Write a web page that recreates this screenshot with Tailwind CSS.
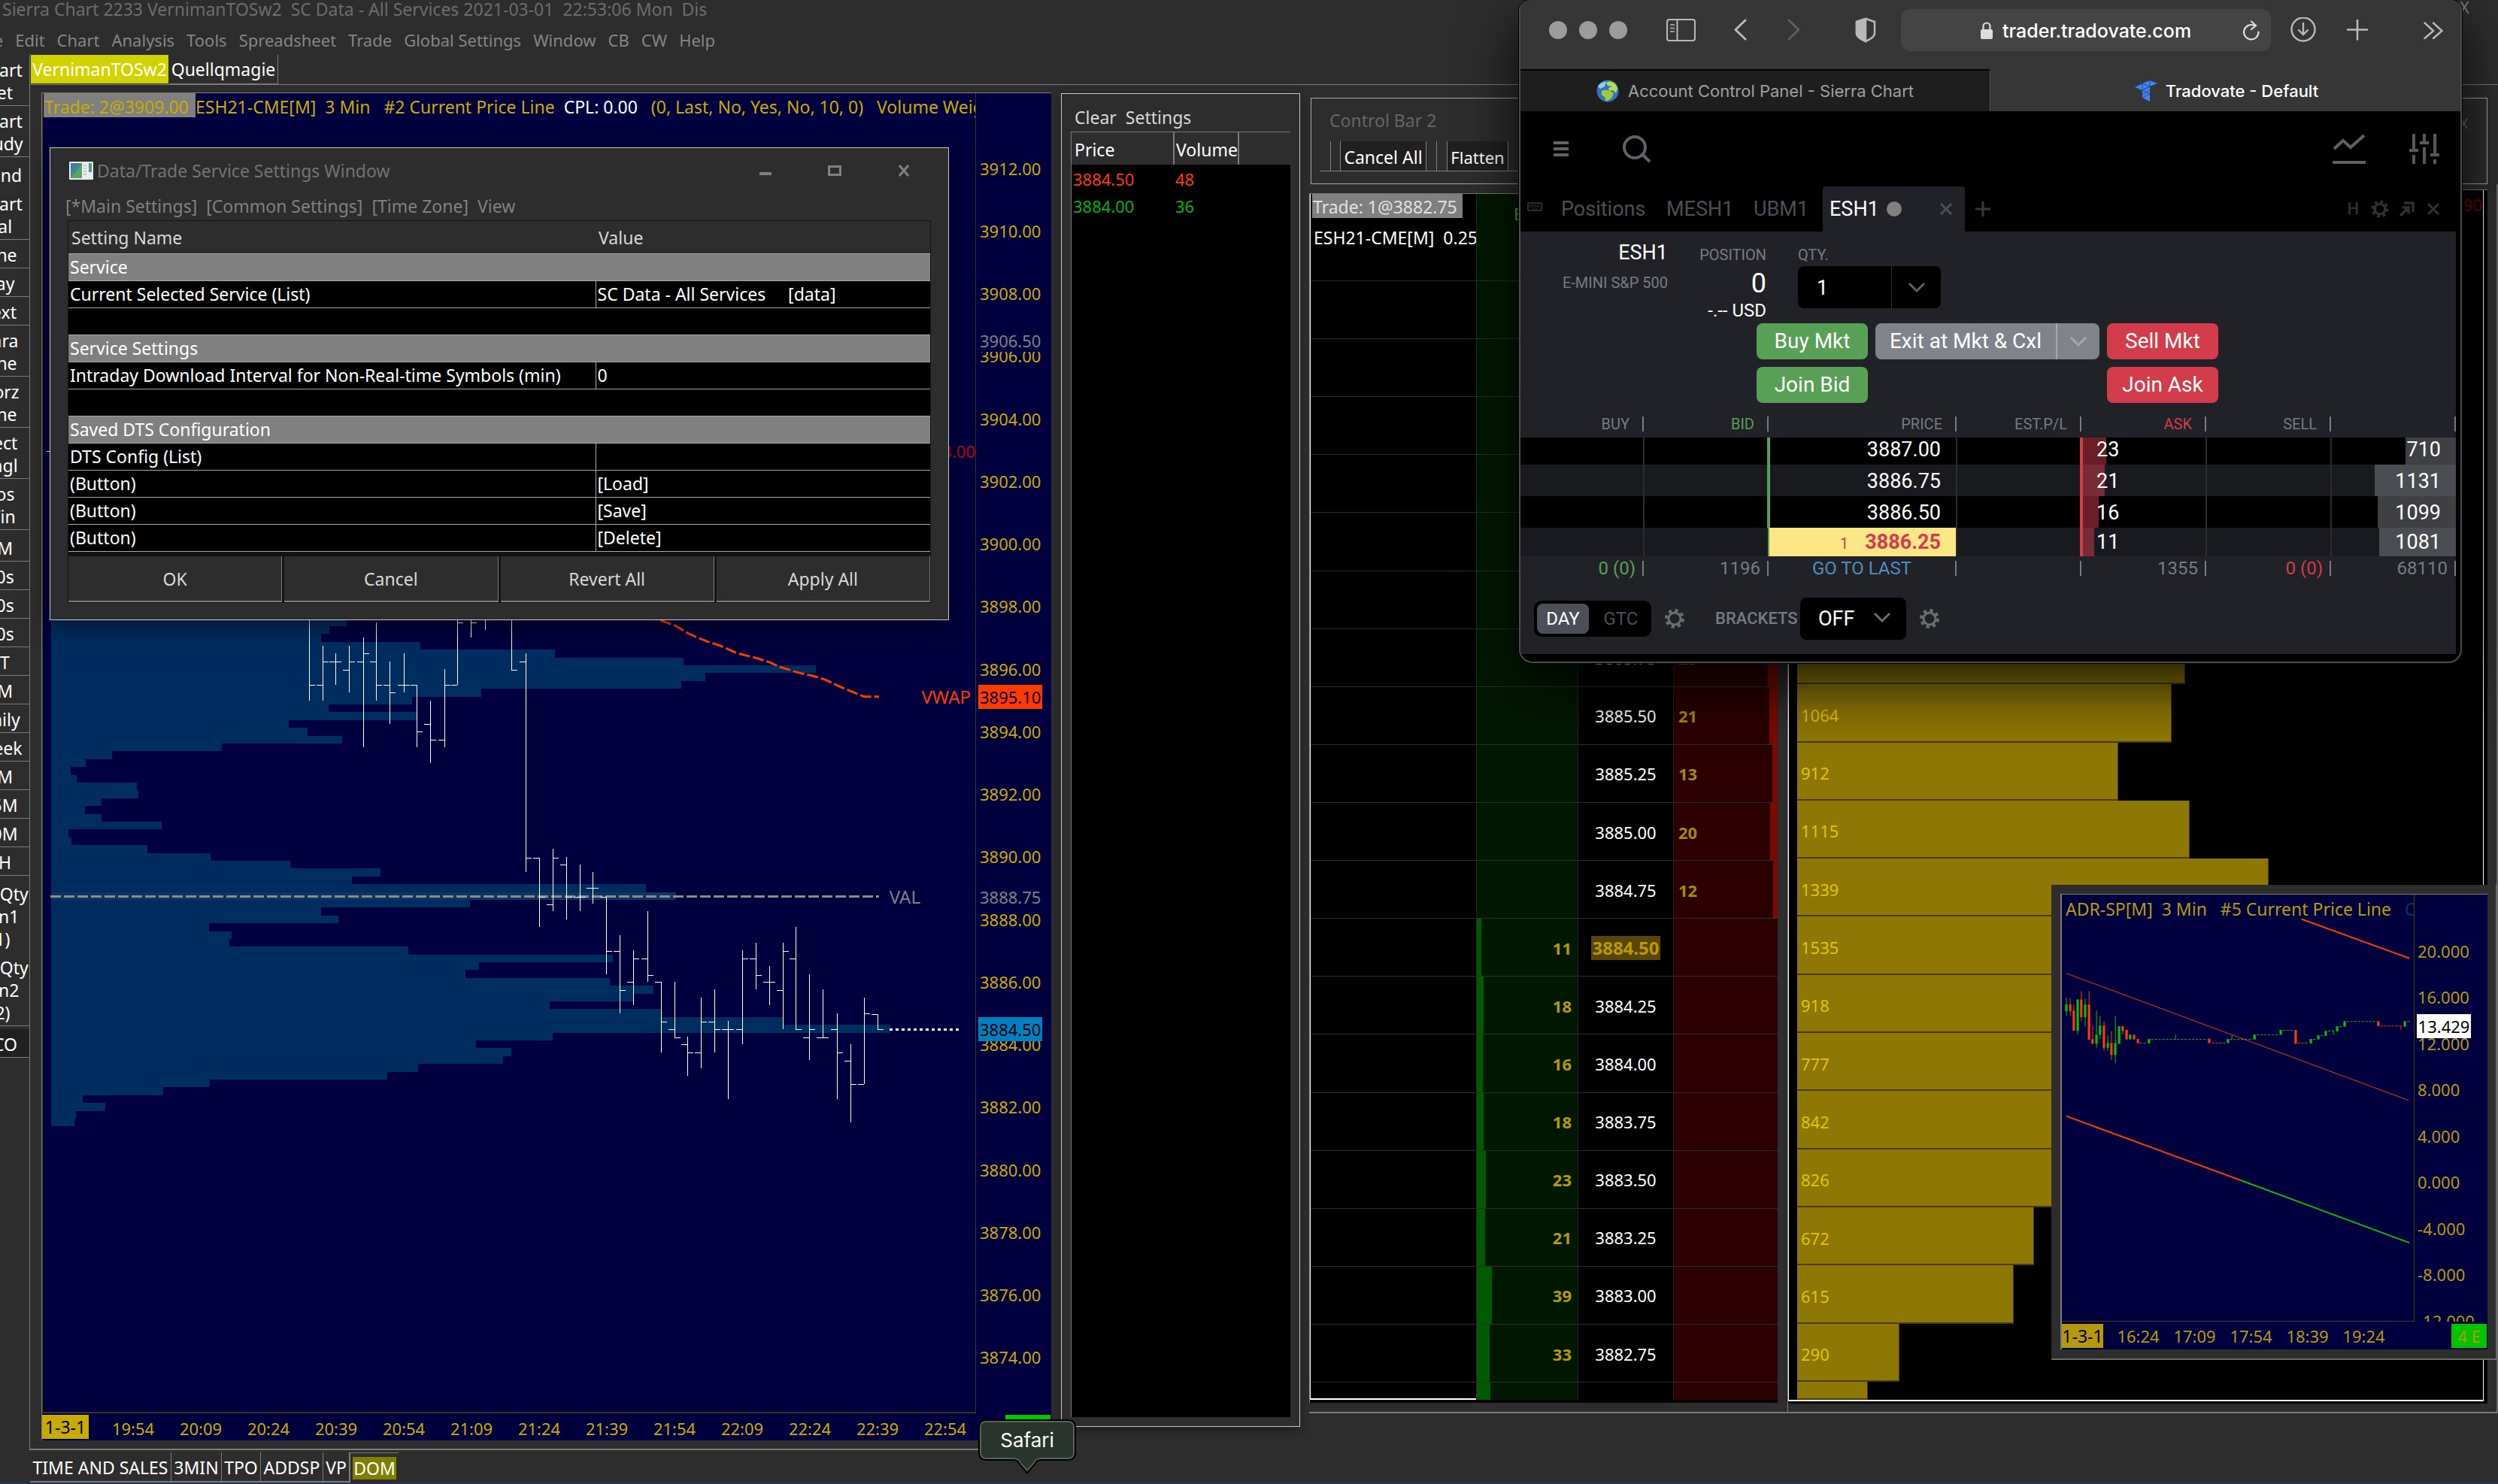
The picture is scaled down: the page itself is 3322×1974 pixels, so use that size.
<!DOCTYPE html>
<html lang="en">
<head>
<meta charset="utf-8">
<title>Sierra Chart</title>
<script src="https://cdn.jsdelivr.net/npm/@tailwindcss/browser@4"></script>
</head>
<body class="bg-[#2d2d2d]">
<div class="relative flex h-screen w-full flex-col overflow-hidden bg-[#2d2d2d] font-['Noto_Sans','Open_Sans',sans-serif] text-[23px] leading-[30px] whitespace-nowrap text-white">

  <!-- Title and menu bar -->
  <header class="h-[72px] shrink-0">
    <h1 class="h-[38px] pl-[3px] leading-[24px] whitespace-pre text-[#6c6c6c]">Sierra Chart 2233 VernimanTOSw2  SC Data - All Services 2021-03-01  22:53:06 Mon  Dis</h1>
    <nav class="-ml-[31px] flex gap-4 text-[22px] text-[#858585]">
      <a href="#">File</a><a href="#">Edit</a><a href="#">Chart</a><a href="#">Analysis</a><a href="#">Tools</a><a href="#">Spreadsheet</a><a href="#">Trade</a><a href="#">Global Settings</a><a href="#">Window</a><a href="#">CB</a><a href="#">CW</a><a href="#">Help</a>
    </nav>
  </header>

  <div class="flex min-h-0 flex-1">
    <!-- Tool strip -->
    <aside class="w-10 shrink-0 overflow-hidden border-r border-[#7b7b7b]">
      <div id="tools" class="-ml-10 flex w-20 flex-col pt-px text-center"></div>
    </aside>

    <div class="flex min-w-0 flex-1 flex-col">
      <!-- Chartbook tabs -->
      <div class="flex h-[41px] shrink-0 items-start border-b border-[#7b7b7b] pt-px pl-px">
        <button class="h-[38px] w-[183px] bg-[#d2d200]">VernimanTOSw2</button>
        <button class="ml-px h-[39px] w-[145px] border-r border-b border-[#7b7b7b]">Quellqmagie</button>
      </div>

      <div class="grid min-h-0 flex-1 grid-cols-[1371fr_318fr_1593fr]">
        <!-- Main price chart -->
        <section class="flex min-w-0 flex-col border-b-2 border-[#7b7b7b] pt-[10px] pr-[13px] pb-[11px] pl-[15px]">
          <div class="flex min-h-0 flex-1 flex-col border-t border-l border-[#7b7b7b]">
            <div class="flex min-h-0 flex-1 border-l border-[#4d4108] bg-[#00003f]">
              <div class="relative min-w-0 flex-1 overflow-hidden border-r border-b-2 border-[#3c3420]">
                <svg id="plot" class="absolute inset-0 h-full w-full" viewBox="57 124 1240 1754" preserveAspectRatio="none" shape-rendering="crispEdges"></svg>
                <div class="relative flex pl-px text-[#c8ab00]">
                  <span class="h-8 w-[202px] shrink-0 bg-[#808080] pt-[3px] pl-px">Trade: 2@3909.00</span>
                  <span class="shrink-0 pt-[3px] whitespace-pre">ESH21-CME[M]  3 Min   #2 Current Price Line  <b class="font-normal text-white">CPL: 0.00</b>   (0, Last, No, Yes, No, 10, 0)   Volume Weighted</span>
                </div>
                <span class="absolute top-[461px] right-0 text-[22px] text-[#c00010]">3903.00</span>
                <span class="absolute top-[788px] right-[6px] text-[24px] text-[#ff3a08]">VWAP</span>
                <span class="absolute top-[1054px] right-[73px] text-[24px] text-[#808080]">VAL</span>
              </div>
              <div class="relative flex w-[100px] shrink-0 flex-col pt-[58px] pb-[33px] text-[22px] text-[#c8ab00]">
                <div id="prices" class="flex flex-1 flex-col"></div>
                <span class="absolute top-[314px] left-[3px] bg-[#00003f] px-[2px] text-[#808080]">3906.50</span>
                <span class="absolute top-[787px] left-[3px] h-8 bg-[#ff3a00] px-[2px] pt-px text-[#00003f]">3895.10</span>
                <span class="absolute top-[1054px] left-[3px] px-[2px] text-[#808080]">3888.75</span>
                <span class="absolute top-[1229px] left-[3px] h-8 bg-[#0080c0] px-[2px] pt-px text-black">3884.50</span>
              </div>
            </div>
            <div class="flex h-9 shrink-0 items-center bg-[#00003f] text-[22px] text-[#c8ab00]">
              <span class="mr-[14px] h-8 w-[62px] bg-[#c8ab00] pt-px text-center text-[23px] text-[#00003f]">1-3-1</span>
              <div id="times" class="flex flex-1 pt-[3px] text-center"></div>
              <div class="flex w-[96px] justify-end pr-px"><i class="h-8 w-[60px] bg-[#00c400]"></i></div>
            </div>
          </div>
        </section>

        <!-- Time and sales -->
        <section class="mt-[11px] mb-[31px] flex flex-col border border-[#c8c8c8] px-[12px] pt-[16px] pb-[12px] shadow-[0_6px_14px_rgba(0,0,0,0.3)]">
          <div class="flex gap-[12px] pl-[5px] text-[#d8d8d8]"><button>Clear</button><button>Settings</button></div>
          <div class="mt-1 flex flex-1 flex-col border-t border-l border-[#7b7b7b]">
            <table class="w-full table-fixed bg-black text-left">
              <thead class="bg-[#2d2d2d]"><tr class="h-[43px]"><th class="w-[136px] border-r-2 border-[#7b7b7b] pt-[2px] pl-[4px] font-normal">Price</th><th class="w-[86px] border-r-2 border-[#7b7b7b] pt-[2px] pl-[2px] font-normal">Volume</th><th></th></tr></thead>
              <tbody class="text-[22px]">
                <tr class="h-9 text-[#ff3a08]"><td class="pt-[2px] pl-[2px]">3884.50</td><td class="pt-[2px] pl-[2px]">48</td><td></td></tr>
                <tr class="h-9 text-[#00b400]"><td class="pt-[2px] pl-[2px]">3884.00</td><td class="pt-[2px] pl-[2px]">36</td><td></td></tr>
              </tbody>
            </table>
            <div class="flex-1 bg-black"></div>
          </div>
        </section>

        <!-- Control bar and trading DOM -->
        <div class="flex min-h-0 min-w-0 flex-col pt-[17px] pb-[49px] pl-[12px]">
          <section class="mr-[14px] ml-[2px] h-[115px] shrink-0 border border-[#a8a8a8] pt-[14px] pl-[11px]">
            <h2 class="pl-[13px] text-[#666]">Control Bar 2</h2>
            <div class="mt-[13px] flex h-10 w-[300px] gap-[13px] border-b border-[#808080] pl-[14px]">
              <i class="-mr-px border-l border-[#808080]"></i>
              <button class="w-[115px] border-x border-[#808080] bg-[#202020] pt-[3px]">Cancel All</button>
              <i class="border-l border-[#808080]"></i>
              <button class="w-[82px] border-x border-[#808080] bg-[#202020] pt-[3px] text-[22px]">Flatten</button>
            </div>
          </section>
          <div class="grid min-h-0 flex-1 grid-cols-[637fr_944fr] border-b-2 border-[#7b7b7b]">
            <section class="flex flex-col border-r border-[#7b7b7b] pt-[12px] pr-[13px] pb-[12px]">
              <div class="flex min-h-0 flex-1 flex-col border-t border-l border-[#7b7b7b] bg-black pb-[4px]">
                <div id="dom" class="relative flex min-h-0 flex-1 flex-col border-l border-white text-[22px]">
                  <div class="grid h-[115px] shrink-0 grid-cols-[220fr_136fr_126fr_139fr]">
                    <div class="overflow-hidden pl-[2px] text-[23px]">
                      <span class="block h-8 w-[200px] bg-[#808080] pt-[2px] pl-px text-[#e0e0e0]">Trade: 1@3882.75</span>
                      <span class="mt-[11px] block pl-[2px] whitespace-pre">ESH21-CME[M]  0.25</span>
                    </div>
                    <div class="border-x border-[#262626] bg-[#001800] pt-[11px] pl-[49px] text-[#4fa04f]">Est</div><div></div><div class="bg-[#2a0000]"></div>
                  </div>
                </div>
              </div>
            </section>
            <section class="flex flex-col border-r-2 border-[#6b6b6b] pt-[7px] pr-[12px] pb-[11px]">
              <div class="flex min-h-0 flex-1 flex-col border-t border-[#7b7b7b] bg-black pr-[5px] pb-[3px]">
                <div id="hist" class="flex min-h-0 flex-1 flex-col border-x border-b-2 border-white pl-[11px] text-[22px]">
                  <div class="h-[116px] shrink-0 pt-[4px] pr-px text-right text-[#700000]">90</div>
                </div>
              </div>
            </section>
          </div>
        </div>
      </div>
    </div>
  </div>

  <!-- Chart tabs -->
  <footer class="flex h-[45px] shrink-0 flex-col border-b-2 border-[#26345c] pt-[3px] pl-10">
    <div class="flex h-10">
      <button class="w-[188px] border-r border-b-2 border-[#7b7b7b] pt-[2px]">TIME AND SALES</button>
      <button class="w-[67px] border-r border-b-2 border-[#7b7b7b] pt-[2px]">3MIN</button>
      <button class="w-[52px] border-r border-b-2 border-[#7b7b7b] pt-[2px]">TPO</button>
      <button class="w-[83px] border-r border-b-2 border-[#7b7b7b] pt-[2px]">ADDSP</button>
      <button class="w-[36px] border-r-2 border-b-2 border-[#7b7b7b] pt-[2px]">VP</button>
      <button class="w-[64px] border-t border-[#7b7b7b] px-[3px]"><span class="block bg-[#808000]">DOM</span></button>
    </div>
  </footer>

  <!-- Background window close marks -->
  <span class="absolute top-[-6px] right-[38px] text-[22px] text-[#808080]">X</span>
  <span class="absolute top-[149px] right-[40px] text-[18px] text-[#707070]">X</span>

  <!-- Data/Trade service settings -->
  <section class="absolute top-[196px] left-[66px] w-[1196px] border border-[#c8c8c8] bg-[#2d2d2d] shadow-[0_8px_30px_rgba(0,0,0,0.5)]">
    <div class="flex h-[60px] items-center pl-[25px] text-[#727272]">
      <svg class="h-6 w-8" viewBox="0 0 32 24"><rect width="32" height="24" rx="1" fill="#e8ecec"/><rect x="2" y="2" width="15" height="20" fill="#3f8f83"/><path d="M2 22L17 4v18z" fill="#5aa56b"/><path d="M2 2h12L2 14z" fill="#3e7fa0"/><path d="M19 5h4M19 9h4M19 13h4M19 17h4" stroke="#a7adb0"/><rect x="26" y="2" width="4" height="12" fill="#4c9d84"/></svg>
      <h2 class="flex-1 pl-[5px]">Data/Trade Service Settings Window</h2>
      <button aria-label="Minimize" class="mt-[8px] mr-[75px] h-[4px] w-4 bg-[#808080]"></button>
      <button aria-label="Maximize" class="mr-[75px] h-[14px] w-[18px] border-[3px] border-[#808080]"></button>
      <button aria-label="Close" class="mr-[51px]"><svg class="h-4 w-4" viewBox="0 0 16 16" stroke="#808080" stroke-width="3"><path d="M2 1l12 14M14 1L2 15"/></svg></button>
    </div>
    <nav class="flex gap-3 pt-[2px] pl-[20px] text-[#808080]"><a href="#">[*Main Settings]</a><a href="#">[Common Settings]</a><a href="#">[Time Zone]</a><a href="#">View</a></nav>
    <div class="mx-[23px] mt-[4px] mb-[22px] border border-[#141414] bg-[#141414]">
      <table class="w-full table-fixed border-collapse bg-black text-left">
        <colgroup><col class="w-[701px]"><col></colgroup>
        <thead class="bg-[#2d2d2d] text-[#d8d8d8]"><tr class="h-[43px]"><th class="pt-[2px] pl-[4px] font-normal">Setting Name</th><th class="pt-[2px] pl-[4px] font-normal">Value</th></tr></thead>
        <tbody id="settings"></tbody>
      </table>
      <div class="mt-[6px] grid grid-cols-4 gap-[3px] text-[#d8d8d8]">
        <button class="h-[61px] border-r border-b-2 border-[#7b7b7b] bg-[#2d2d2d] pt-[2px]">OK</button>
        <button class="h-[61px] border-r border-b-2 border-[#7b7b7b] bg-[#2d2d2d] pt-[2px]">Cancel</button>
        <button class="h-[61px] border-r border-b-2 border-[#7b7b7b] bg-[#2d2d2d] pt-[2px]">Revert All</button>
        <button class="h-[61px] border-r border-b-2 border-[#7b7b7b] bg-[#2d2d2d] pt-[2px]">Apply All</button>
      </div>
    </div>
  </section>

  <!-- ADR chart window -->
  <section class="absolute top-[1177px] right-px flex h-[632px] w-[593px] flex-col border-r-2 border-b-2 border-[#6b6b6b] bg-[#2d2d2d] pt-[12px] pr-[11px] pb-[12px] pl-[12px] text-[22px] text-[#b49a0a]">
    <div class="flex min-h-0 flex-1 flex-col border-t border-l-2 border-[#7b7b7b] bg-[#00003f]">
      <div class="flex min-h-0 flex-1">
        <div class="relative min-w-0 flex-1 overflow-hidden border-r border-b border-[#4d4108]">
          <svg id="adr" class="absolute inset-0 h-full w-full" viewBox="107 113 1180 1272" preserveAspectRatio="none"></svg>
          <div class="relative pt-[4px] pl-[5px] text-[23px] whitespace-pre">ADR-SP[M]  3 Min   #5 Current Price Line   <span class="text-[#003c50]">CPL</span></div>
        </div>
        <div class="relative w-[97px] shrink-0 overflow-hidden pt-[44px] pl-[4px]">
          <div id="adrPrices" class="flex h-[492px] flex-col"></div>
          <div class="pt-[16px]">-12.000</div>
          <span class="absolute top-[159px] left-[3px] h-8 w-[72px] bg-white pt-px text-center text-black">13.429</span>
        </div>
      </div>
      <div class="flex h-[37px] shrink-0 items-center">
        <span class="mr-[9px] h-8 w-[55px] bg-[#b49a0a] pt-px text-center text-[23px] text-[#00003f]">1-3-1</span>
        <span class="w-[75px] pt-px text-center">16:24</span><span class="w-[75px] pt-px text-center">17:09</span><span class="w-[75px] pt-px text-center">17:54</span><span class="w-[75px] pt-px text-center">18:39</span><span class="w-[75px] pt-px text-center">19:24</span>
        <span class="mr-px ml-auto h-8 w-[47px] bg-[#00c400] pt-px text-center">4 E</span>
      </div>
    </div>
  </section>

  <!-- Safari window -->
  <section class="absolute top-0 right-[48px] w-[1254px] overflow-hidden rounded-t-[14px] rounded-b-[18px] border-x-2 border-b-2 border-[#4c4c4c] bg-black font-['Roboto',sans-serif] shadow-[0_0_0_1px_#000,0_30px_80px_rgba(0,0,0,0.8)]">
    <div class="flex h-[92px] items-start bg-[#363636] pt-[12px] pl-[38px] font-['Inter',sans-serif]">
      <div class="flex h-14 flex-1 items-center">
        <i class="h-6 w-6 rounded-full bg-[#9c9c9c]"></i><i class="ml-4 h-6 w-6 rounded-full bg-[#9c9c9c]"></i><i class="ml-4 h-6 w-6 rounded-full bg-[#9c9c9c]"></i>
        <button aria-label="Sidebar" class="ml-[52px]"><svg class="h-[30px] w-[40px]" viewBox="0 0 40 30" fill="none" stroke="#b9b9b9" stroke-width="2"><rect x="1" y="1" width="37" height="28" rx="3"/><path d="M14.500 1v28"/><path d="M5 8h6M5 12.500h6M5 17h6" stroke-width="1.500"/></svg></button>
        <button aria-label="Back" class="ml-[48px]"><svg class="h-8 w-[20px]" viewBox="0 0 20 32" fill="none" stroke="#b9b9b9" stroke-width="3" stroke-linecap="round" stroke-linejoin="round"><path d="M17 3L4 15.500L17 28"/></svg></button>
        <button aria-label="Forward" class="ml-[52px]"><svg class="h-8 w-[20px]" viewBox="0 0 20 32" fill="none" stroke="#5f5f5f" stroke-width="3" stroke-linecap="round" stroke-linejoin="round"><path d="M3 3L16 15.500L3 28"/></svg></button>
        <button aria-label="Privacy report" class="ml-[71px]"><svg class="h-[34px] w-[28px]" viewBox="0 0 28 34" fill="none" stroke="#b9b9b9" stroke-width="2.500"><path d="M14 2L26 6v15c0 5-6 8-12 11C8 29 2 26 2 21V6z"/><path d="M14 2v30C8 29 2 26 2 21V6z" fill="#b9b9b9"/></svg></button>
      </div>
      <div class="ml-[31px] flex h-14 w-[492px] items-center rounded-[12px] bg-[#444] pt-[2px]">
        <svg class="ml-[106px] h-6 w-4" viewBox="0 0 16 24"><rect y="10" width="16" height="13" rx="2" fill="#dcdcdc"/><path d="M3.500 11V6a4.500 4.500 0 0 1 9 0v5" fill="none" stroke="#dcdcdc" stroke-width="2.200"/></svg>
        <label class="sr-only" for="url">Address</label>
        <input id="url" class="ml-[13px] w-[300px] bg-transparent text-[25px] font-medium text-white" value="trader.tradovate.com">
        <button aria-label="Reload" class="mr-[15px] ml-auto"><svg class="h-[28px] w-[22px]" viewBox="0 0 22 28" fill="none" stroke="#dcdcdc" stroke-width="2.200" stroke-linecap="round"><path d="M20.500 15.500A9.700 9.700 0 1 1 15 7H17"/><path d="M11 1.500L17 7L11 12"/></svg></button>
      </div>
      <div class="flex h-14 w-[252px] items-center pl-[26px]">
        <button aria-label="Downloads"><svg class="h-[34px] w-[34px]" viewBox="0 0 34 34" fill="none" stroke="#b9b9b9" stroke-width="2.400" stroke-linecap="round"><circle cx="17" cy="16" r="15.500"/><path d="M17 8v14M11 17l6 6l6-6"/></svg></button>
        <button aria-label="New tab" class="ml-[41px]"><svg class="h-[28px] w-[28px]" viewBox="0 0 28 28" stroke="#b9b9b9" stroke-width="2.600" stroke-linecap="round"><path d="M14 0.500v26M1 13.500h26"/></svg></button>
        <button aria-label="More" class="ml-[74px]"><svg class="h-6 w-[26px]" viewBox="0 0 26 24" fill="none" stroke="#b9b9b9" stroke-width="2.400" stroke-linecap="round"><path d="M1.500 2.500L13 13L1.500 23M13 2.500L24.500 13L13 23"/></svg></button>
      </div>
    </div>
    <div class="grid h-14 grid-cols-2 bg-[#363636] font-['Inter',sans-serif] text-[22px]">
      <a href="#" class="flex items-center justify-center border-t-2 border-r border-t-black border-r-[#555] bg-[#1e1e1e] text-[#a0a0a0]">
        <svg class="mr-[12px] h-[30px] w-[30px]" viewBox="0 0 30 30"><circle cx="15" cy="15" r="14.500" fill="#2f74c4"/><path d="M2 9C5 4 9 3 13 3l-2 6l-6 3z" fill="#9ccbe8"/><path d="M13 4c6-4 14 1 15 8l-2 6l-4-4l-5 1l-1-4l5-2l-6-1z" fill="#b6dc4c"/><path d="M7 15c5-3 12 0 16 3l-3 7c-4 2-5 4-8 3c1-5-3-6-5-8z" fill="#9fc93f"/></svg>
        Account Control Panel - Sierra Chart</a>
      <a href="#" class="flex items-center justify-center pt-px pl-[2px] font-medium text-white">
        <svg class="mr-[10px] h-[30px] w-[32px]" viewBox="0 0 32 30"><path d="M1 10L11 5L21 1l10 4L21 9v20l-10-5V14z" fill="#3f83f8"/><path d="M11 5v9l10-5L11 5M21 1v8M11 14l10 5l-10 5M21 9L11 14M11 20l10-6" fill="none" stroke="#2b4f91"/></svg>
        Tradovate - Default</a>
    </div>
    <div class="flex h-[100px] items-center pl-[44px]">
      <button aria-label="Menu"><svg class="h-5 w-5" viewBox="0 0 20 20" fill="#626367"><path d="M0 0h20v4H0zM0 8h20v4H0zM0 16h20v4H0z"/></svg></button>
      <button aria-label="Search" class="ml-[71px]"><svg class="h-[38px] w-[38px]" viewBox="0 0 38 38" fill="none" stroke="#606166" stroke-width="4"><circle cx="17" cy="17" r="14"/><path d="M27 26l10 10"/></svg></button>
      <button aria-label="Charts" class="ml-auto"><svg class="h-10 w-[44px]" viewBox="0 0 44 40" fill="none" stroke="#606060" stroke-width="4"><path d="M2 20L14 9L24 18L42 2M0 38h44"/></svg></button>
      <button aria-label="Filters" class="mr-[28px] ml-[58px]"><svg class="h-10 w-10" viewBox="0 0 40 40" fill="none" stroke="#57585c" stroke-width="4"><path d="M6 0v22M0 22h12M6 28v12M20 0v12M14 12h12M20 18v22M34 0v28M28 28h12M34 34v6"/></svg></button>
    </div>
    <div class="flex h-[60px] items-center text-[27px] text-[#4b4e56]">
      <svg class="mb-[6px] ml-[9px] h-3 w-5" viewBox="0 0 20 12" fill="none" stroke="#3a3b3f"><rect x="1" y="1" width="18" height="10" rx="1" stroke-width="1.500"/><path d="M3 4h14M3 6h14M6 9h8" stroke-dasharray="1 1" stroke-width="1.500"/></svg>
      <a href="#" class="ml-[25px] w-[118px]">Positions</a><a href="#" class="ml-[22px] w-[94px]">MESH1</a><a href="#" class="ml-[22px] w-[92px]">UBM1</a>
      <div class="flex h-full w-[189px] items-center rounded-t-[4px] bg-[#212227] pl-[9px] text-white">ESH1<i class="ml-[10px] h-5 w-5 rounded-full bg-[#808080]"></i><button aria-label="Close tab" class="mr-[16px] ml-auto"><svg class="h-[18px] w-[18px]" viewBox="0 0 18 18" stroke="#4b4e56" stroke-width="3"><path d="M2 2l14 14M16 2L2 16"/></svg></button></div>
      <button aria-label="Add tab" class="ml-[14px]"><svg class="h-5 w-5" viewBox="0 0 20 20" stroke="#36383c" stroke-width="3"><path d="M10 0v20M0 10h20"/></svg></button>
      <div class="mr-[27px] ml-auto flex items-center text-[22px] font-medium text-[#2f3033]">H
        <svg class="ml-[16px] h-6 w-6" viewBox="0 0 28 28" fill="none" stroke="#2f3033"><circle cx="14" cy="14" r="8" stroke-width="4"/><circle cx="14" cy="14" r="11.500" stroke-width="4" stroke-dasharray="4.500 4.530"/></svg>
        <svg class="ml-[14px] h-5 w-5" viewBox="0 0 20 20" fill="none" stroke="#2f3033" stroke-width="3.500"><path d="M6 2h12v12M1 19L12 8M4 8h8v8"/></svg>
        <svg class="ml-[16px] h-[18px] w-[18px]" viewBox="0 0 18 18" stroke="#2f3033" stroke-width="3"><path d="M2 2l14 14M16 2L2 16"/></svg>
      </div>
    </div>

    <main class="mr-[6px] mb-[10px] h-[562px] bg-[#212227]">
      <div class="flex h-[122px] pt-[12px]">
        <div class="w-[196px] text-right"><div class="text-[27px] leading-8">ESH1</div><div class="mt-3 text-[20px] leading-6 text-[#767b83]">E-MINI S&amp;P 500</div></div>
        <div class="w-[131px] pt-[7px] text-right"><div class="text-[20px] leading-6 text-[#767b83]">POSITION</div><div class="mt-[6px] text-[36px] leading-10">0</div><div class="mt-[2px] text-[24px] leading-7">-.-- USD</div></div>
        <div class="ml-[42px] pt-[7px]"><label for="qty" class="block text-[20px] leading-6 text-[#767b83]">QTY.</label>
          <div class="mt-[3px] flex h-14 w-[190px] items-center overflow-hidden rounded-[8px] bg-black"><input id="qty" class="h-full w-[125px] border-r border-[#333] bg-transparent pt-[2px] pl-[25px] text-[27px]" value="1"><button aria-label="Quantity presets" class="flex flex-1 justify-center"><svg class="h-4 w-6" viewBox="0 0 24 16" fill="none" stroke="#606266" stroke-width="3"><path d="M2 3l10 10L22 3"/></svg></button></div></div>
      </div>
      <div class="ml-[314px] grid w-[614px] grid-cols-[148px_298px_148px] gap-[10px] text-[28px]">
        <button class="h-12 rounded-[8px] bg-[#57a055]">Buy Mkt</button>
        <div class="flex h-12 overflow-hidden rounded-[8px] bg-[#80838c]"><button class="w-[242px] border-r-2 border-[#a6a8ae]">Exit at Mkt &amp; Cxl</button><button aria-label="Exit options" class="flex flex-1 items-center justify-center"><svg class="h-4 w-6" viewBox="0 0 24 16" fill="none" stroke="#a6a8ae" stroke-width="3"><path d="M2 3l10 10L22 3"/></svg></button></div>
        <button class="h-12 rounded-[8px] bg-[#d33c4b]">Sell Mkt</button>
        <button class="h-12 rounded-[8px] bg-[#57a055]">Join Bid</button><span></span>
        <button class="h-12 rounded-[8px] bg-[#d33c4b]">Join Ask</button>
      </div>
      <table class="w-full table-fixed border-collapse text-right text-[27px]">
        <colgroup><col class="w-[164px]"><col class="w-[166px]"><col class="w-[250px]"><col class="w-[166px]"><col class="w-[166px]"><col class="w-[166px]"><col class="w-[166px]"></colgroup>
        <thead id="ladderHead" class="text-[20px] text-[#767b83]"></thead>
        <tbody id="ladder"></tbody>
        <tfoot id="ladderFoot" class="text-[24px] text-[#767b83]"></tfoot>
      </table>
      <div class="mt-[19px] flex h-14 items-center pl-[18px] text-[24px]">
        <div class="flex h-12 w-[156px] items-center rounded-[10px] bg-black p-1"><button class="h-10 w-[69px] rounded-[8px] bg-[#4d4f58]">DAY</button><button class="flex-1 pl-[6px] text-[#4b4e54]">GTC</button></div>
        <svg class="ml-[17px] h-[28px] w-[28px]" viewBox="0 0 28 28" fill="none" stroke="#6c6d71"><circle cx="14" cy="14" r="8" stroke-width="3"/><circle cx="14" cy="14" r="11" stroke-width="4" stroke-dasharray="4.300 4.340"/></svg>
        <label for="brackets" class="ml-[40px] w-[113px] text-[22px] font-medium text-[#767b83]">BRACKETS</label>
        <div class="relative"><select id="brackets" class="h-14 w-[141px] appearance-none rounded-[8px] bg-black pl-[24px] text-[27px] text-white"><option>OFF</option></select><svg class="pointer-events-none absolute top-[18px] right-[20px] h-4 w-6" viewBox="0 0 24 16" fill="none" stroke="#6c6d71" stroke-width="3"><path d="M2 3l10 10L22 3"/></svg></div>
        <svg class="ml-[17px] h-[28px] w-[28px]" viewBox="0 0 28 28" fill="none" stroke="#6c6d71"><circle cx="14" cy="14" r="8" stroke-width="3"/><circle cx="14" cy="14" r="11" stroke-width="4" stroke-dasharray="4.300 4.340"/></svg>
      </div>
    </main>
  </section>

  <!-- Dock tooltip -->
  <div class="absolute top-[1888px] left-[1300px] h-[72px] w-[132px] font-['Inter',sans-serif]">
    <svg class="absolute inset-0 h-full w-full" viewBox="0 0 132 72"><path d="M12 2H120q9 0 9 9V44q0 9-9 9H84q-6 0-9 6L66 70L57 59q-3-6-9-6H12q-9 0-9-9V11q0-9 9-9z" fill="#28342c" stroke="#000" stroke-width="4"/><path d="M12 3H120q8 0 8 8V44q0 8-8 8H84q-7 0-10 7L66 68L58 59q-3-7-10-7H12q-8 0-8-8V11q0-8 8-8z" fill="none" stroke="#56635a" stroke-width="2"/></svg>
    <span class="relative block pt-[13px] text-center text-[26px]">Safari</span>
  </div>
</div>

<script>
const $ = id => document.getElementById(id);

// Tool strip: [lines, divider style]
const tools = [
  [['Chart','Set'],1],[['Chart','Study'],2],[['Hand'],0],[['Chart','Val'],1],[['Line'],1],[['Ray'],1],[['Text'],1],
  [['Para','Line'],1],[['Horz','Line'],1],[['Rect','angl'],1],[['Pos','Win'],2],[['1M'],1],[['10s'],1],[['20s'],1],[['30s'],1],
  [['ST'],1],[['3M'],1],[['Daily'],1],[['Week'],1],[['5M'],1],[['15M'],1],[['30M'],1],[['1H'],2],
  [['SellQty','Btn1','(1)'],0],[['SellQty','Btn2','(2)'],2],[['CCO'],3]
];
const edge = {
  0: 'border-b border-transparent pt-[5px] pb-[2px]',
  1: 'border-b border-[#7b7b7b] pt-[5px] pb-[2px]',
  2: 'mb-1 border-b border-[#7b7b7b] pt-[5px] pb-[2px]',
  3: 'border-b border-[#7b7b7b] bg-[#202020] pt-[5px] pb-[2px]'
};
$('tools').innerHTML = tools.map(([l, e]) => `<button class="${edge[e]}">${l.map(t => `<span class="block">${t}</span>`).join('')}</button>`).join('');

// Price and time axes
let h = '';
for (let p = 3912; p >= 3874; p -= 2) h += `<div class="flex min-h-0 flex-1 items-center pl-[5px]">${p}.00</div>`;
$('prices').innerHTML = h;
$('times').innerHTML = ['19:54','20:09','20:24','20:39','20:54','21:09','21:24','21:39','21:54','22:09','22:24','22:39','22:54'].map(t => `<span class="flex-1">${t}</span>`).join('');

// Volume profile
const vol = [461,438,427,559,738,909,1085,938,906,640,548,437,554,384,409,455,295,149,114,94,102,182,184,135,113,135,215,91,95,196,280,386,506,468,859,899,625,427,450,278,308,305,543,815,637,619,811,869,842,731,879,1042,1184,735,633,680,669,556,515,279,217,110,140,101,99];
const y0 = 822.7, rh = 10.395;
let s = '<rect x="68" y="700" width="380" height="123" fill="#002d60"/>';
vol.forEach((v, i) => {
  const a = Math.round(y0 + i * rh), b = Math.round(y0 + (i + 1) * rh);
  s += `<rect x="68" y="${a}" width="${v - 68}" height="${b - a}" fill="${i === 35 ? '#0c3565' : '#002d60'}"/>`;
});
// Price bars: x, high, low, open, close
const Y = v => Math.round(780 + v / 2.063);
const left = [[920,60,314,0,270],[960,163,314,270,207],[1000,184,270,207,207],[1040,163,291,228,207],[1081,140,441,207,184],[1121,99,314,207,270],[1161,206,377,270,291],[1202,184,291,270,270],[1242,270,441,270,399],[1282,314,485,378,421],[1323,227,441,421,270],[1363,60,270,270,99],[1403,60,140,0,99],[1444,60,120,0,0],[1524,60,228,0,228],[1565,184,783,207,744]];
const right = [[117,744,935,744,851],[154,720,891,872,744],[191,743,914,764,851],[228,763,891,851,851],[265,784,871,828,828],[302,851,1065,851,1000],[339,957,1172,1000,1107],[376,999,1149,1086,1022],[414,891,1085,1022,1066],[451,1086,1279,1086,1194],[488,1085,1238,1216,1237],[525,1236,1343,1257,1280],[562,1129,1322,1280,1194],[599,1106,1279,1194,1216],[636,1193,1407,1216,1216],[674,999,1256,1216,1022],[711,978,1106,1022,1066],[748,1042,1149,1086,1086],[785,978,1215,1107,1000],[822,935,1217,1022,1216],[859,1065,1300,1237,1216],[896,1106,1238,1237,1237],[934,1172,1407,1216,1280],[971,1256,1471,1301,1365],[1008,1129,1366,1365,1172],[1045,1173,1216,1173,1216]];
s += `<path d="M67 1192.500H1169" stroke="#8c8c80" stroke-width="3" stroke-dasharray="14 4"/>`;
let d = '';
const bar = (x, [, hi, lo, o, c]) => {
  d += `M${x} ${Y(hi)}V${Y(lo)}`;
  if (o) d += `M${x - 8} ${Y(o)}H${x}`;
  if (c) d += `M${x} ${Y(c)}H${x + 8}`;
};
left.forEach(b => bar(Math.round(b[0] / 2.24), b));
right.forEach(b => bar(Math.round(660 + b[0] / 2.063), b));
s += `<path d="${d}" fill="none" stroke="#fff" stroke-width="1"/>`;
const vw = [[450,93],[490,107],[530,131],[578,151],[615,163],[660,183],[715,197],[752,209],[775,220],[830,237],[870,246],[905,257],[945,276],[1010,303],[1050,303]];
s += `<polyline points="${vw.map(([x, y]) => `${660 + x / 2.063},${780 + y / 2.063}`).join(' ')}" fill="none" stroke="#ff3a00" stroke-width="3" stroke-dasharray="15 4" shape-rendering="auto"/>`;
s += `<path d="M1183 1369.500H1275" stroke="#fff" stroke-width="3" stroke-dasharray="4 4"/><path d="M62 600H68" stroke="#fff"/>`;
$('plot').innerHTML = s;

// Settings table
const set = [['g','Service'],['r','Current Selected Service (List)','SC Data - All Services     [data]'],['e'],['g','Service Settings'],['r','Intraday Download Interval for Non-Real-time Symbols (min)','0'],['e'],['g','Saved DTS Configuration'],['r','DTS Config (List)',''],['r','(Button)','[Load]'],['r','(Button)','[Save]'],['r','(Button)','[Delete]']];
$('settings').innerHTML = set.map(([k, a, b]) =>
  k === 'g' ? `<tr class="h-9 bg-[#808080]"><td colspan="2" class="border-y border-[#a8a8a8] py-0 pl-[2px]">${a}</td></tr>` :
  k === 'e' ? `<tr class="h-9"><td colspan="2"></td></tr>` :
  `<tr class="h-9"><td class="border-r border-b border-[#a8a8a8] py-0 pl-[2px]">${a}</td><td class="border-b border-[#a8a8a8] py-0 pl-[2px] whitespace-pre">${b}</td></tr>`).join('');

// DOM rows: bid, price, ask
const dom = [[],[],[],[],[],[],['','3885.75',25],['','3885.50',21],['','3885.25',13],['','3885.00',20],['','3884.75',12],[11,'3884.50'],[18,'3884.25'],[16,'3884.00'],[18,'3883.75'],[23,'3883.50'],[21,'3883.25'],[39,'3883.00'],[33,'3882.75'],[35]];
$('dom').insertAdjacentHTML('beforeend', dom.map(([b, p, a], i) => {
  const last = i === 19;
  return `<div class="${last ? 'grid h-6 shrink-0 grid-cols-[220fr_136fr_126fr_139fr] border-t border-[#2c2c2c]' : 'grid min-h-0 flex-1 grid-cols-[220fr_136fr_126fr_139fr] items-stretch border-t border-[#2c2c2c]'}">
    <div class="${last ? 'border-b-2 border-white' : ''}"></div>
    <div class="relative flex items-center justify-end border-x border-[#262626] bg-[#001800] pt-px pr-[8px] font-bold text-[#b89a00]">${b ? `<i class="absolute inset-y-0 left-0 bg-[#005a00]" style="width:${Math.round(b * 0.52)}px"></i>` : ''}${b && !last ? b : ''}</div>
    <div class="flex items-center justify-center pt-px">${i === 11 ? `<b class="h-8 bg-[#594607] px-px pt-px text-[24px] text-[#b89a00]">${p}</b>` : p || ''}</div>
    <div class="relative flex items-center border-l border-[#262626] bg-[#2a0000] pt-px pl-[6px] font-bold text-[#a88a00]">${a || ''}${a ? `<i class="absolute inset-y-0 right-0 bg-[#7c0800]" style="width:${Math.round(a * 0.52)}px"></i>` : ''}</div>
  </div>`;
}).join(''));

// Volume-at-price histogram
const hist = [0,0,0,0,0,0,1101,1064,912,1115,1339,1535,918,777,842,826,672,615,290,201];
$('hist').insertAdjacentHTML('beforeend', hist.map((v, i) => {
  const last = i === 19;
  return `<div class="${last ? 'h-6 shrink-0' : 'min-h-0 flex-1'}">${v ? `<div class="flex h-full items-center border-r border-b-2 border-[#4a3d02] bg-[#8d7705] pt-[6px] pl-[5px] text-[#e0c400]" style="width:${(v * 0.4675 / 9.1).toFixed(2)}%">${last ? '' : v}</div>` : ''}</div>`;
}).join(''));

// ADR chart
$('adrPrices').innerHTML = ['20.000','16.000','12.000','8.000','4.000','0.000','-4.000','-8.000'].map(t => `<div class="flex min-h-0 flex-1 items-center">${t}</div>`).join('');
const G = '#00c400', R = '#ff3a00';
const cs = [[122,421,475,441,461,G],[135,423,474,441,461,R],[147,441,519,459,519,R],[160,426,530,426,519,G],[172,401,491,426,479,R],[185,423,506,441,479,G],[198,401,546,441,546,R],[210,506,558,544,558,R],[223,459,570,531,558,G],[235,475,545,504,531,G],[248,491,579,504,570,R],[261,533,579,556,570,G],[273,520,606,556,591,R],[286,475,616,556,591,G],[299,506,558,506,558,G],[311,506,531,506,520,R],[324,517,545,517,545,R],[336,531,545,531,545,G],[349,531,545,531,545,R],[362,544,556,544,556,R],[399,544,557,544,557,G],[601,543,556,543,556,R],[664,544,556,544,556,G],[753,531,545,531,545,G],[841,517,531,517,531,G],[891,517,558,517,558,R],[942,544,557,544,557,G],[967,533,545,533,545,G],[992,520,534,520,534,G],[1030,506,521,506,521,G],[1055,491,507,491,507,G],[1168,491,505,491,505,R],[1257,491,507,491,507,G]];
s = cs.map(([x, a, b, t, u, c]) => `<rect x="${x - 1}" y="${a}" width="2.500" height="${b - a}" fill="${c}"/><rect x="${x - 4}" y="${t}" width="8" height="${u - t}" fill="${c}"/>`).join('');
[[368,392,556,R],[406,595,545,G],[610,655,556,R],[670,747,545,G],[760,835,531,G],[848,888,518,G],[897,935,556,R],[949,962,545,G],[975,986,534,G],[1000,1022,520,G],[1038,1050,507,G],[1062,1165,491.5,G],[1175,1250,505,R],[1265,1275,491.5,G]].forEach(([a, b, y, c]) => s += `<path d="M${a} ${y}H${b}" stroke="${c}" stroke-width="2.200" stroke-dasharray="8 4.500"/>`);
[[488,531,545,G],[677,531,545,G],[1017,520,532,G],[1244,505,516,R]].forEach(([x, a, b, c]) => s += `<path d="M${x} ${a}V${b}" stroke="${c}" stroke-width="2.500"/>`);
s += `<g fill="none" stroke="${R}"><path d="M910 186L1272 303M122 774L705 965" stroke-width="4.500"/><path d="M122 348L1270 727" stroke-width="2.200"/></g><path d="M705 965L1272 1152" stroke="${G}" stroke-width="4.500"/>`;
$('adr').innerHTML = s;

// Price ladder
const heads = [['BUY'],['BID','text-[#57a055]'],['PRICE'],['EST.P/L'],['ASK','text-[#d33c4b]'],['SELL'],['']];
$('ladderHead').innerHTML = '<tr>' + heads.map(([t, c]) => `<th class="px-0 pt-[18px] pb-[8px] font-normal"><div class="h-5 border-r-2 border-[#767b83] pr-[17px] leading-5"><span class="${c || ''}">${t}</span></div></th>`).join('') + '</tr>';
const rows = [['3887.00',23,31,'710',67],['3886.75',21,29,'1131',108],['3886.50',16,21,'1099',104],['3886.25',11,15,'1081',102]];
const rowCls = ['h-9 bg-black leading-[28px]','h-[42px] bg-[#191a1f] leading-[40px]','h-[42px] bg-black leading-[40px]','h-9 bg-[#191a1f] leading-[34px]'];
$('ladder').innerHTML = rows.map(([p, a, w, v, vw], i) => `<tr class="${rowCls[i]}">
  <td class="border-r-2 border-[#2c2d31]"></td><td></td>
  <td class="${i === 3 ? 'border-l-2 border-[#57a055] bg-[#fbe785] p-0 pt-[2px] pr-[20px] align-top font-bold text-[#d33c4b]' : 'border-l-4 border-[#57a055] p-0 pt-[2px] pr-[20px] align-top'}">${i === 3 ? '<span class="mr-[22px] text-[20px] font-normal">1</span>' : ''}${p}</td>
  <td class="border-l-2 border-[#2c2d31]"></td>
  <td class="relative border-l-4 border-[#d33c4b] p-0 pt-[2px] pl-[18px] text-left align-top"><i class="absolute inset-y-0 left-0 bg-[#d33c4b]/50" style="width:${w}px"></i><span class="relative">${a}</span></td>
  <td class="border-x-2 border-[#2c2d31]"></td>
  <td class="relative p-0 pt-[2px] pr-[20px] align-top"><i class="absolute inset-y-0 right-0 bg-[#7c8086]/50" style="width:${vw}px"></i><span class="relative">${v}</span></td></tr>`).join('');
const foot = [['0 (0)','text-[#57a055]'],['1196'],['GO TO LAST','text-[#4f8ec0]'],[''],['1355'],['0 (0)','text-[#d33c4b]'],['68110']];
$('ladderFoot').innerHTML = '<tr>' + foot.map(([t, c], i) => `<td class="px-0 pt-[6px] pb-[10px]"><div class="${i === 2 ? 'flex h-5 justify-center border-r-2 border-[#767b83] leading-5' : 'flex h-5 justify-end border-r-2 border-[#767b83] pr-[9px] leading-5'}"><span class="${c || ''}">${t}</span></div></td>`).join('') + '</tr>';
</script>
</body>
</html>
